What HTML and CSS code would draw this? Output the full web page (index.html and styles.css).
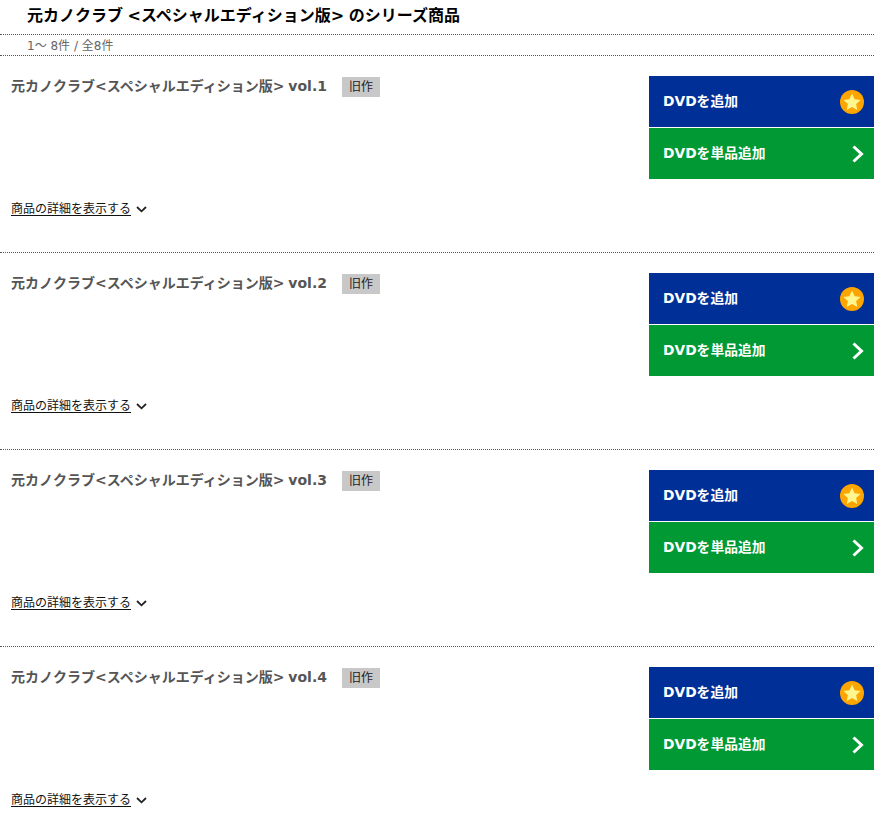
FILE: index.html
```html
<!DOCTYPE html>
<html lang="ja">
  <head>
    <meta charset="UTF-8" />
    <title>元カノクラブ シリーズ商品</title>
    <link rel="stylesheet" href="styles.css">
  </head>
  <body>
    <div class="container">
      <h1 class="series-title">元カノクラブ &lt;スペシャルエディション版&gt; のシリーズ商品</h1>
      <p class="count">1～ 8件 / 全8件</p>

      <div class="item">
        <div class="item-top">
          <div class="item-name">
            <a class="name" href="#">元カノクラブ&lt;スペシャルエディション版&gt; vol.1</a>
            <span class="tag">旧作</span>
          </div>
          <div class="buttons">
            <a class="btn btn-blue" href="#">DVDを追加
              <svg class="star" viewBox="0 0 24 24"><circle cx="12" cy="12" r="12" fill="#ffa500"/><path fill="#fff68f" d="M12 3.6l2.6 5.6 6 .7-4.5 4.1 1.2 6L12 17.1 6.700 20l1.200-6-4.500-4.100 6-.7z"/></svg>
            </a>
            <a class="btn btn-green" href="#">DVDを単品追加
              <svg class="arrow" viewBox="0 0 12 18"><path fill="none" stroke="#fff" stroke-width="3" d="M1.500 1.500L9.500 9l-8 7.500"/></svg>
            </a>
          </div>
        </div>
        <div class="detail-row">
          <a class="detail" href="#">商品の詳細を表示する</a>
          <svg class="chev" viewBox="0 0 11 7"><path fill="none" stroke="#222" stroke-width="1.800" d="M1 1l4.500 4.300L10 1"/></svg>
        </div>
      </div>

      <div class="item">
        <div class="item-top">
          <div class="item-name">
            <a class="name" href="#">元カノクラブ&lt;スペシャルエディション版&gt; vol.2</a>
            <span class="tag">旧作</span>
          </div>
          <div class="buttons">
            <a class="btn btn-blue" href="#">DVDを追加
              <svg class="star" viewBox="0 0 24 24"><circle cx="12" cy="12" r="12" fill="#ffa500"/><path fill="#fff68f" d="M12 3.6l2.6 5.6 6 .7-4.5 4.1 1.2 6L12 17.1 6.700 20l1.200-6-4.500-4.100 6-.7z"/></svg>
            </a>
            <a class="btn btn-green" href="#">DVDを単品追加
              <svg class="arrow" viewBox="0 0 12 18"><path fill="none" stroke="#fff" stroke-width="3" d="M1.500 1.500L9.500 9l-8 7.500"/></svg>
            </a>
          </div>
        </div>
        <div class="detail-row">
          <a class="detail" href="#">商品の詳細を表示する</a>
          <svg class="chev" viewBox="0 0 11 7"><path fill="none" stroke="#222" stroke-width="1.800" d="M1 1l4.500 4.300L10 1"/></svg>
        </div>
      </div>

      <div class="item">
        <div class="item-top">
          <div class="item-name">
            <a class="name" href="#">元カノクラブ&lt;スペシャルエディション版&gt; vol.3</a>
            <span class="tag">旧作</span>
          </div>
          <div class="buttons">
            <a class="btn btn-blue" href="#">DVDを追加
              <svg class="star" viewBox="0 0 24 24"><circle cx="12" cy="12" r="12" fill="#ffa500"/><path fill="#fff68f" d="M12 3.6l2.6 5.6 6 .7-4.5 4.1 1.2 6L12 17.1 6.700 20l1.200-6-4.500-4.100 6-.7z"/></svg>
            </a>
            <a class="btn btn-green" href="#">DVDを単品追加
              <svg class="arrow" viewBox="0 0 12 18"><path fill="none" stroke="#fff" stroke-width="3" d="M1.500 1.500L9.500 9l-8 7.500"/></svg>
            </a>
          </div>
        </div>
        <div class="detail-row">
          <a class="detail" href="#">商品の詳細を表示する</a>
          <svg class="chev" viewBox="0 0 11 7"><path fill="none" stroke="#222" stroke-width="1.800" d="M1 1l4.500 4.300L10 1"/></svg>
        </div>
      </div>

      <div class="item">
        <div class="item-top">
          <div class="item-name">
            <a class="name" href="#">元カノクラブ&lt;スペシャルエディション版&gt; vol.4</a>
            <span class="tag">旧作</span>
          </div>
          <div class="buttons">
            <a class="btn btn-blue" href="#">DVDを追加
              <svg class="star" viewBox="0 0 24 24"><circle cx="12" cy="12" r="12" fill="#ffa500"/><path fill="#fff68f" d="M12 3.6l2.6 5.6 6 .7-4.5 4.1 1.2 6L12 17.1 6.700 20l1.200-6-4.500-4.100 6-.7z"/></svg>
            </a>
            <a class="btn btn-green" href="#">DVDを単品追加
              <svg class="arrow" viewBox="0 0 12 18"><path fill="none" stroke="#fff" stroke-width="3" d="M1.500 1.500L9.500 9l-8 7.500"/></svg>
            </a>
          </div>
        </div>
        <div class="detail-row">
          <a class="detail" href="#">商品の詳細を表示する</a>
          <svg class="chev" viewBox="0 0 11 7"><path fill="none" stroke="#222" stroke-width="1.800" d="M1 1l4.500 4.300L10 1"/></svg>
        </div>
      </div>
    </div>
  </body>
</html>
```
FILE: styles.css
```css
html {
  overflow: hidden;
}
body {
  margin: 0;
  background-color: #fff;
  color: #222;
  font-family: "DejaVu Sans", "Noto Sans CJK JP", sans-serif;
  font-size: 12px;
}
.container {
  width: 874px;
  height: 823px;
  overflow: hidden;
}
.series-title {
  margin: 0;
  height: 34px;
  padding-left: 27px;
  box-sizing: border-box;
  color: #000;
  font-size: 16px;
  font-weight: bold;
  line-height: 32px;
  word-spacing: -1px;
}
.count {
  margin: 0;
  height: 22px;
  padding-left: 27px;
  box-sizing: border-box;
  border-top: 1px dotted #555;
  border-bottom: 1px dotted #555;
  color: #666;
  font-size: 12px;
  line-height: 23px;
}
.item {
  height: 197px;
  padding: 20px 0 0 11px;
  box-sizing: border-box;
  border-bottom: 1px dotted #555;
}
.item-top {
  display: flex;
  justify-content: space-between;
  margin-bottom: 20px;
}
.item-name {
  display: flex;
  align-items: flex-start;
  gap: 15px;
}
.name {
  color: #555;
  font-size: 14px;
  font-weight: bold;
  line-height: 20px;
  text-decoration: none;
  word-spacing: -1px;
}
.tag {
  width: 38px;
  height: 20px;
  margin-top: 1px;
  background-color: #c8c8c8;
  color: #222;
  font-size: 12px;
  line-height: 20px;
  text-align: center;
}
.buttons {
  display: flex;
  flex-direction: column;
  gap: 1px;
  width: 225px;
}
.btn {
  display: flex;
  align-items: center;
  justify-content: space-between;
  height: 51px;
  padding: 0 10px 4px 14px;
  box-sizing: border-box;
  color: #fff;
  font-size: 13.800px;
  font-weight: bold;
  text-decoration: none;
}
.btn-blue {
  background-color: #003097;
}
.btn-green {
  background-color: #009933;
}
.star {
  width: 24px;
  height: 24px;
  margin-top: 5px;
}
.arrow {
  width: 12px;
  height: 18px;
  margin-top: 5px;
}
.detail-row {
  display: flex;
  align-items: center;
  gap: 5px;
  height: 20px;
}
.detail {
  color: #111;
  font-size: 12px;
  line-height: 20px;
  text-underline-offset: 2px;
}
.chev {
  width: 11px;
  height: 7px;
}
```
